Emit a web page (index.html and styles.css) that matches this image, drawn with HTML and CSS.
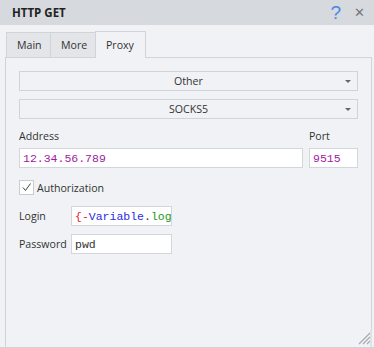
FILE: index.html
```html
<!DOCTYPE html>
<html>
<head>
    <title>HTTP GET</title>
    <link rel="stylesheet" href="styles.css">
</head>
<body>
    <div class="titlebar">
        <span class="title">HTTP GET</span>
        <span class="help">?</span>
        <span class="close">&#x2715;</span>
    </div>
    <div class="tabs">
        <div class="tab">Main</div>
        <div class="tab">More</div>
        <div class="tab active">Proxy</div>
    </div>
    <div class="panel">
        <div class="combo">Other<span class="arrow"></span></div>
        <div class="combo">SOCKS5<span class="arrow"></span></div>
        <div class="addr-grid">
            <label>Address</label>
            <label>Port</label>
            <div class="field mono purple">12.34.56.789</div>
            <div class="field mono purple">9515</div>
        </div>
        <div class="check-row">
            <span class="checkbox">
                <svg width="13" height="13" viewBox="0 0 13 13"><path d="M3 6.5 L5.5 9.5 L10.5 2.5" fill="none" stroke="#444" stroke-width="1"/></svg>
            </span>
            <span>Authorization</span>
        </div>
        <div class="cred-row">
            <label>Login</label>
            <div class="field mono"><span class="red">{-</span><span class="blue">Variable</span><span class="dark">.</span><span class="green">log</span></div>
        </div>
        <div class="cred-row">
            <label>Password</label>
            <div class="field mono dark">pwd</div>
        </div>
    </div>
    <div class="grip">
        <svg width="16" height="16" viewBox="0 0 16 16">
            <path d="M14 3 L3 14 M14 7 L7 14 M14 11 L11 14" stroke="#a9acb1" stroke-width="1.3"/>
            <path d="M15 0 L15 16" stroke="#cfd2d7" stroke-width="1"/>
        </svg>
    </div>
</body>
</html>
```

FILE: styles.css
```css
/* Ventana */
body {
    margin: 0;
    width: 374px;
    height: 347px;
    background-color: #f0f2f5;
    border-bottom: 1px solid #cfd2d7;
    font-family: "Open Sans", "Noto Sans", Arial, sans-serif;
    font-size: 10.6px;
    color: #333;
    position: relative;
    overflow: hidden;
}
.titlebar {
    height: 25px;
    background-color: #d6d9de;
    display: flex;
    align-items: center;
    padding: 0 9px 0 12px;
}
.title {
    font-weight: bold;
    font-size: 11.5px;
    color: #222;
    flex: 1;
}
.help {
    color: #4a86e8;
    font-size: 19px;
    font-family: "Liberation Sans", Arial, sans-serif;
    margin-right: 13px;
}
.close {
    color: #777;
    font-size: 13px;
    font-family: "DejaVu Sans", sans-serif;
}
/* Pestañas */
.tabs {
    display: flex;
    align-items: flex-end;
    margin-top: 6px;
    padding-left: 6px;
    height: 26px;
}
.tab {
    height: 24px;
    line-height: 24px;
    padding: 0 10px;
    background-color: #e3e5e9;
    border: 1px solid #d0d3d8;
    border-bottom: none;
    margin-right: -1px;
}
.tab:nth-child(1) { width: 23px; }
.tab:nth-child(2) { width: 24px; }
.tab.active {
    height: 26px;
    line-height: 26px;
    width: 29px;
    background-color: #f0f2f5;
    position: relative;
    z-index: 1;
    margin-bottom: -1px;
}
.panel {
    margin: 0 2px 0 5px;
    height: 280px;
    border: 1px solid #d0d3d8;
    padding: 13px 13px 0 13px;
}
.combo {
    height: 18px;
    line-height: 18px;
    border: 1px solid #d0d3d8;
    text-align: center;
    position: relative;
    margin-bottom: 8px;
}
.arrow {
    position: absolute;
    right: 6px;
    top: 8px;
    border-left: 3.5px solid transparent;
    border-right: 3.5px solid transparent;
    border-top: 3px solid #666;
}
label {
    display: block;
}
.addr-grid {
    display: grid;
    grid-template-columns: 1fr 49px;
    column-gap: 6px;
    row-gap: 4px;
    margin-top: 10px;
}
.addr-grid label {
    height: 15px;
    line-height: 15px;
}
.field {
    height: 18px;
    line-height: 19px;
    border: 1px solid #d3d6db;
    background-color: white;
    padding-left: 3px;
    overflow: hidden;
    white-space: nowrap;
}
.mono {
    font-family: "Liberation Mono", "Courier New", monospace;
    font-size: 11.5px;
}
.purple { color: #a0199f; }
.red { color: #e8202a; }
.blue { color: #2a2ae8; }
.green { color: #1a9a1a; }
.dark { color: #333; }
.check-row {
    display: flex;
    align-items: center;
    margin-top: 12px;
    height: 15px;
}
.checkbox {
    width: 13px;
    height: 13px;
    border: 1px solid #c9ccd1;
    background-color: white;
    margin-right: 3px;
    display: flex;
}
.cred-row {
    display: flex;
    align-items: center;
    margin-top: 11px;
}
.cred-row + .cred-row {
    margin-top: 8px;
}
.cred-row label {
    width: 52px;
}
.cred-row .field {
    width: 96px;
}
.grip {
    position: absolute;
    right: 2px;
    bottom: 1px;
    width: 16px;
    height: 16px;
    background-color: #f0f2f5;
}
```
